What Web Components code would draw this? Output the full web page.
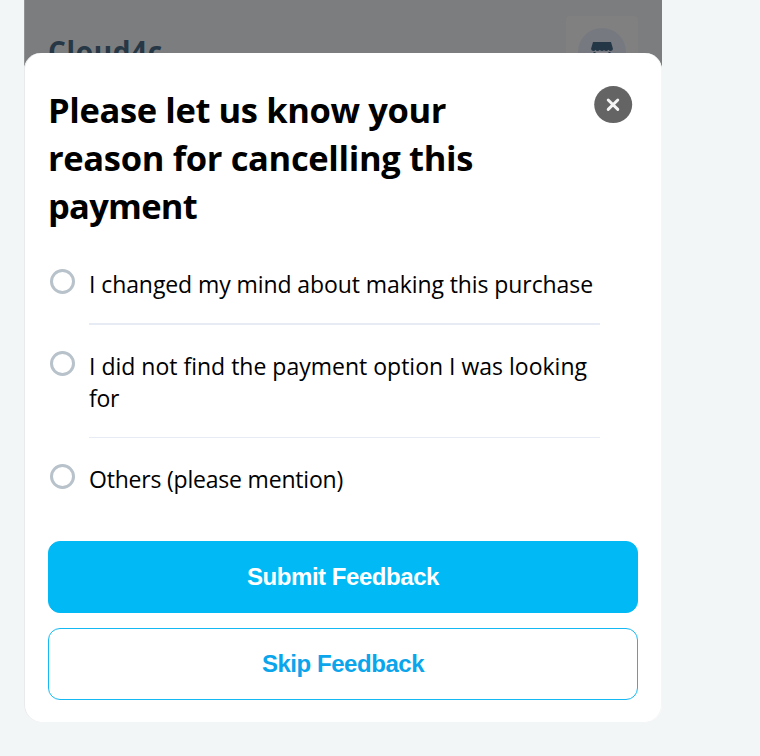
<!DOCTYPE html>
<html lang="en">
<head>
<meta charset="utf-8">
<title>Cancel payment feedback</title>
<style>
html, body { margin: 0; height: 100%; background: #f2f6f7; overflow: hidden; }
body { font-family: "Open Sans", "Noto Sans", sans-serif; color: #000; }
</style>
</head>
<body>
<checkout-page>
  <merchant-header slot="header">Cloud4c</merchant-header>
  <feedback-sheet>
    <sheet-title slot="title">
      <text-line style="--w:398px">Please let us know your</text-line>
      <text-line style="--w:425px">reason for cancelling this</text-line>
      <text-line style="--w:149px">payment</text-line>
    </sheet-title>
    <close-button slot="close"></close-button>
    <reason-option style="height:59px;--rule:2px"><text-line style="--w:504px">I changed my mind about making this purchase</text-line></reason-option>
    <reason-option style="height:90px;--rule:1px;margin-top:23px"><text-line style="--w:498px">I did not find the payment option I was looking</text-line><text-line style="--w:30px">for</text-line></reason-option>
    <reason-option style="height:57px;--rule:0px;margin-top:23px"><text-line style="--w:254px">Others (please mention)</text-line></reason-option>
    <action-button slot="actions" kind="primary">Submit Feedback</action-button>
    <action-button slot="actions">Skip Feedback</action-button>
  </feedback-sheet>
</checkout-page>

<script>
const define = (name, html, ready) => {
  const template = document.createElement('template');
  template.innerHTML = html;
  customElements.define(name, class extends HTMLElement {
    constructor() {
      super();
      this.attachShadow({ mode: 'open' }).append(template.content.cloneNode(true));
    }
    connectedCallback() { if (ready) ready(this); }
  });
};

define('checkout-page', `
<style>
:host { display: block; box-sizing: border-box; height: 756px; padding: 0 98px 0 24px; overflow: hidden; }
.card { width: 638px; display: grid; grid-template-rows: 53px 669px; }
.back { height: 73px; overflow: hidden; background: #7c7d7e; box-shadow: inset 1px 0 #929394; }
::slotted(feedback-sheet) { position: relative; }
</style>
<div class="card"><div class="back"><slot name="header"></slot></div><slot></slot></div>`);

define('merchant-header', `
<style>
:host { display: flex; justify-content: space-between; align-items: flex-start; height: 110px; padding: 16px 24px 0 24px; color: #263746; }
.name { font: 700 28px/36px "Open Sans", sans-serif; letter-spacing: .65px; padding-top: 17px; }
.logo { display: block; }
</style>
<div class="name"><slot></slot></div>
<svg class="logo" width="72" height="72" viewBox="0 0 72 72">
<rect width="72" height="72" rx="4" fill="#808080"/>
<circle cx="36" cy="36" r="24" fill="#777980"/>
<path d="M27 26H45L47 33Q46.500 35 44.500 35Q43 35 42.500 33.800Q41.500 35 40 35Q38.500 35 38 33.800Q37.500 35 36 35Q34.500 35 34 33.800Q33 35 31.500 35Q30 35 29.500 33.800Q29 35 27.500 35Q25.500 35 25 33Z" fill="#243746"/>
<path d="M27.500 36h2v12h-2zM42.500 36h2v12h-2z" fill="#243746"/>
<path d="M30 36.500h12v10H30z" fill="#8c8e92"/>
</svg>`);

define('feedback-sheet', `
<style>
:host { display: flex; flex-direction: column; box-sizing: border-box; position: relative; width: 638px; height: 669px; padding: 33px 24px 22px; background: #fff; border-radius: 17px; box-shadow: inset 1px 0 #e8eaeb, inset -1px 0 #f5f6f6; }
.top { display: flex; justify-content: space-between; height: 180px; padding: 0 5px 0 0; }
.actions { display: grid; gap: 15px; margin-top: auto; }
</style>
<div class="top"><slot name="title"></slot><slot name="close"></slot></div>
<slot></slot>
<div class="actions"><slot name="actions"></slot></div>`);

define('sheet-title', `
<style>:host { display: block; font: 700 34.500px/48px "Open Sans", sans-serif; }</style><slot></slot>`);

define('close-button', `
<style>:host { display: block; width: 39px; height: 38px; } svg { display: block; }</style>
<svg width="39" height="38" viewBox="0 0 39 38"><ellipse cx="19.200" cy="18.600" rx="19" ry="18.500" fill="#646464"/><path d="M14.200 14L23.800 23.400M23.800 14L14.200 23.400" stroke="#f4f4f4" stroke-width="2.900" stroke-linecap="round"/></svg>`);

define('reason-option', `
<style>
:host { display: grid; flex: none; box-sizing: content-box; grid-template-columns: 25px 511px; column-gap: 14px; padding-left: 2px; }
i { width: 19px; height: 19px; border: 3px solid #b8c2cb; border-radius: 50%; margin-top: 3px; }
.text { padding-top: 2px; font: 400 23px/32px "Open Sans", sans-serif; border-bottom: var(--rule) solid #e7ebf4; }
</style>
<i></i><div class="text"><slot></slot></div>`);

define('action-button', `
<style>
:host { display: flex; align-items: center; justify-content: center; box-sizing: border-box; height: 72px; border: 1px solid #14b9f3; border-radius: 12px; background: #fff; color: #0ba5ec; font: 700 24px/28px "Liberation Sans", Arial, sans-serif; letter-spacing: -.45px; }
:host([kind="primary"]) { background: #00b9f5; border-color: #00b9f5; color: #fff; }
</style>
<slot></slot>`);

// Spreads a line of text evenly over the measure given by --w.
// Registered last so that the inherited font is in place when it measures.
define('text-line', `
<style>:host { display: block; white-space: nowrap; } span { display: inline-block; }</style><span><slot></slot></span>`,
el => {
  const span = el.shadowRoot.querySelector('span');
  const target = parseFloat(el.style.getPropertyValue('--w'));
  span.style.letterSpacing = (target - span.getBoundingClientRect().width) / el.textContent.length + 'px';
});
</script>
</body>
</html>
